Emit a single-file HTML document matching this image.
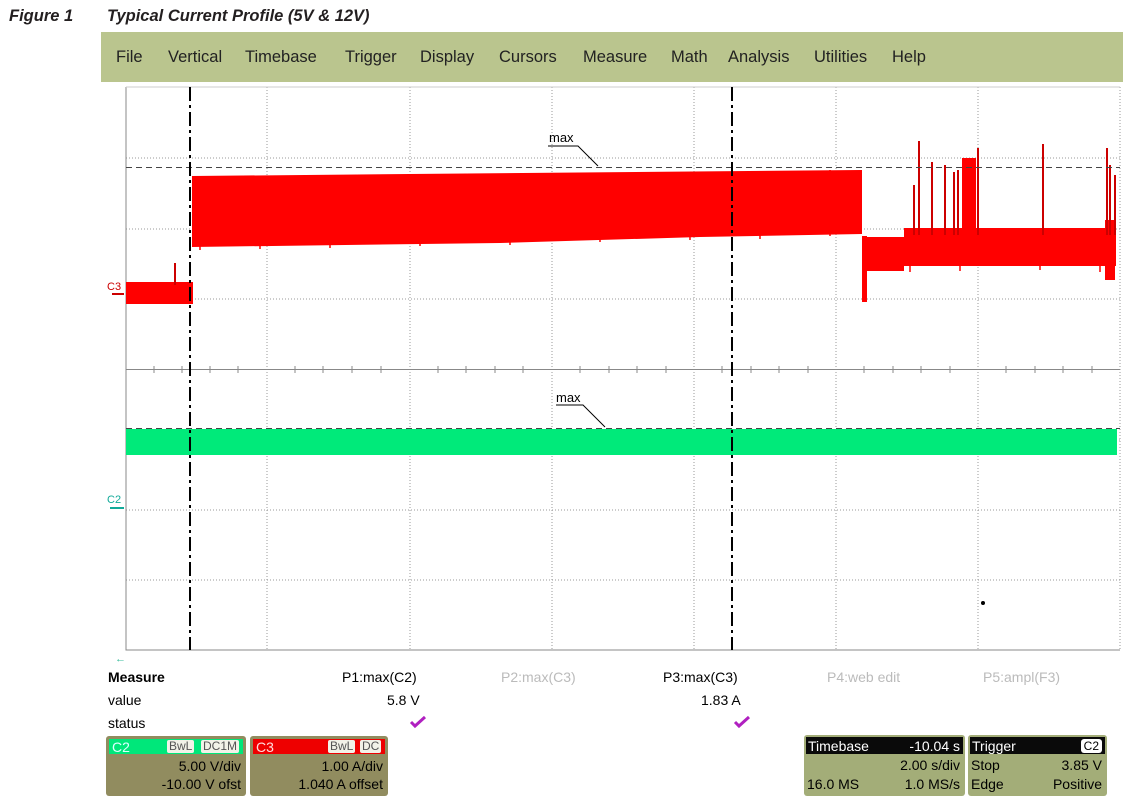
<!DOCTYPE html>
<html><head><meta charset="utf-8"><style>
body{margin:0;width:1145px;height:807px;background:#fff;position:relative;overflow:hidden;font-family:"Liberation Sans",sans-serif}
.t{position:absolute;white-space:nowrap}
.fig{font-weight:bold;font-style:italic;font-size:16.5px;color:#231f20;top:7px}
.menu{position:absolute;left:101px;top:32px;width:1022px;height:50px;background:#bac58e}
.menu span{position:absolute;top:16px;font-size:16.5px;color:#222}
.box{position:absolute;background:#8f8a5e;border-radius:3px;color:#000;font-size:14px}
.box .h{position:absolute;left:3px;right:3px;top:3px;height:15px}
.tg{position:absolute;background:#f2f2e8;color:#555;font-size:12px;top:1px;height:13px;line-height:13px;padding:0 2px;border-radius:2px}
</style></head><body>
<div class="t fig" style="left:9px">Figure 1</div>
<div class="t fig" style="left:107px">Typical Current Profile (5V &amp; 12V)</div>
<div class="menu">
<span style="left:15px">File</span><span style="left:67px">Vertical</span><span style="left:144px">Timebase</span><span style="left:244px">Trigger</span><span style="left:319px">Display</span><span style="left:398px">Cursors</span><span style="left:482px">Measure</span><span style="left:570px">Math</span><span style="left:627px">Analysis</span><span style="left:713px">Utilities</span><span style="left:791px">Help</span>
</div>
<svg width="1145" height="807" style="position:absolute;left:0;top:0">
<g stroke="#999" stroke-width="1" stroke-dasharray="1,2" fill="none">
<path d="M267 87V650M410 87V650M552 87V650M694 87V650M836 87V650M978 87V650M1120 87V650"/>
<path d="M126 158H1120M126 229H1120M126 299H1120M126 440H1120M126 510H1120M126 580H1120"/>
</g>
<path d="M126 87V650H1120" stroke="#888" fill="none"/>
<path d="M126 87H1120" stroke="#ccc"/>
<path d="M126 369.5H1120" stroke="#888"/>
<g stroke="#888">
<path d="M154 366v7M182 366v7M210 366v7M238 366v7M295 366v7M323 366v7M352 366v7M381 366v7M438 366v7M466 366v7M495 366v7M523 366v7M580 366v7M609 366v7M637 366v7M666 366v7M722 366v7M751 366v7M779 366v7M808 366v7M864 366v7M893 366v7M921 366v7M950 366v7M1006 366v7M1035 366v7M1063 366v7M1092 366v7"/>
</g>
<g fill="#f00">
<rect x="126" y="282" width="67" height="22"/>
<path d="M192 176 L862 170 L862 234 L700 237 L500 243 L192 247Z"/>
<rect x="866" y="237" width="38" height="34"/>
<rect x="904" y="228" width="212" height="38"/>
<rect x="962" y="158" width="14" height="75"/>
<rect x="862" y="236" width="5" height="66"/>
<rect x="1105" y="220" width="10" height="60"/>
</g>
<g stroke="#c00" stroke-width="2">
<path d="M919 141V235M932 162V235M945 165V235M954 172V235M958 170V235M978 148V235M1043 144V235M1107 148V235M1110 165V235M914 185V235M1115 175V235M175 263V285"/>
</g>
<g stroke="#f00" stroke-width="1.5">
<path d="M200 176V250M260 176V249M330 175V248M420 175V246M510 174V245M600 173V242M690 172V240M760 171V239M830 170V236M910 262V272M960 262V271M1040 262V270M1100 262V272"/>
</g>
<rect x="126" y="429" width="991" height="26" fill="#00ea7a"/>
<g stroke="#444" stroke-dasharray="6,4" fill="none">
<path d="M126 167.5H1120M126 428.5H1120"/>
</g>
<g stroke="#000" stroke-width="2" stroke-dasharray="14,4,3,4" fill="none">
<path d="M190 87V650M732 87V650"/>
</g>
<g stroke="#000" fill="none">
<path d="M548 146H578L598 166M556 405H583L605 427"/>
</g>
<text x="549" y="142" font-size="13" font-family="Liberation Sans" fill="#000">max</text>
<text x="556" y="402" font-size="13" font-family="Liberation Sans" fill="#000">max</text>
<text x="107" y="290" font-size="11" font-family="Liberation Sans" fill="#c00">C3</text>
<path d="M112 294H124" stroke="#c00" stroke-width="2"/>
<text x="107" y="503" font-size="11" font-family="Liberation Sans" fill="#1a9">C2</text>
<path d="M110 508H124" stroke="#1a9" stroke-width="2"/>
<circle cx="983" cy="603" r="2" fill="#000"/>
<text x="115" y="662" font-size="11" fill="#3b9">&#8592;</text>
<path d="M411 722l4 4 10-9" stroke="#b020c0" stroke-width="3" fill="none"/>
<path d="M735 722l4 4 10-9" stroke="#b020c0" stroke-width="3" fill="none"/>
</svg>
<div class="t" style="left:108px;top:669px;font-size:14px;font-weight:bold">Measure</div>
<div class="t" style="left:108px;top:692px;font-size:14px">value</div>
<div class="t" style="left:108px;top:715px;font-size:14px">status</div>
<div class="t" style="left:342px;top:669px;font-size:14px">P1:max(C2)</div>
<div class="t" style="left:387px;top:692px;font-size:14px">5.8 V</div>
<div class="t" style="left:501px;top:669px;font-size:14px;color:#bbb">P2:max(C3)</div>
<div class="t" style="left:663px;top:669px;font-size:14px">P3:max(C3)</div>
<div class="t" style="left:701px;top:692px;font-size:14px">1.83 A</div>
<div class="t" style="left:827px;top:669px;font-size:14px;color:#bbb">P4:web edit</div>
<div class="t" style="left:983px;top:669px;font-size:14px;color:#bbb">P5:ampl(F3)</div>

<div class="box" style="left:106px;top:736px;width:140px;height:60px;background:#918c5f">
<div class="h" style="background:#00e77a"><span style="position:absolute;left:3px;top:0;color:#dff;font-size:14px">C2</span><span class="tg" style="left:58px">BwL</span><span class="tg" style="left:92px">DC1M</span></div>
<div class="t" style="right:5px;top:22px">5.00 V/div</div>
<div class="t" style="right:5px;top:40px">-10.00 V ofst</div></div>
<div class="box" style="left:250px;top:736px;width:138px;height:60px;background:#918c5f">
<div class="h" style="background:#ee0000"><span style="position:absolute;left:3px;top:0;color:#fdd;font-size:14px">C3</span><span class="tg" style="left:75px">BwL</span><span class="tg" style="left:107px">DC</span></div>
<div class="t" style="right:5px;top:22px">1.00 A/div</div>
<div class="t" style="right:5px;top:40px">1.040 A offset</div></div>

<div class="box" style="left:804px;top:735px;width:161px;height:61px;background:#a3ad78">
<div class="h" style="background:#0a0a0a;height:17px;top:2px;left:2px;right:2px"><span style="position:absolute;left:2px;top:1px;color:#fff">Timebase</span><span style="position:absolute;right:3px;top:1px;color:#fff">-10.04 s</span></div>
<div class="t" style="right:5px;top:22px">2.00 s/div</div>
<div class="t" style="left:3px;top:41px">16.0 MS</div>
<div class="t" style="right:5px;top:41px">1.0 MS/s</div></div>
<div class="box" style="left:968px;top:735px;width:139px;height:61px;background:#a3ad78">
<div class="h" style="background:#0a0a0a;height:17px;top:2px;left:2px;right:2px"><span style="position:absolute;left:2px;top:1px;color:#fff">Trigger</span><span style="position:absolute;right:3px;top:2px;background:#fff;color:#000;font-size:12px;padding:0 3px;border-radius:3px">C2</span></div>
<div class="t" style="left:3px;top:22px">Stop</div>
<div class="t" style="right:5px;top:22px">3.85 V</div>
<div class="t" style="left:3px;top:41px">Edge</div>
<div class="t" style="right:5px;top:41px">Positive</div></div>
</body></html>
